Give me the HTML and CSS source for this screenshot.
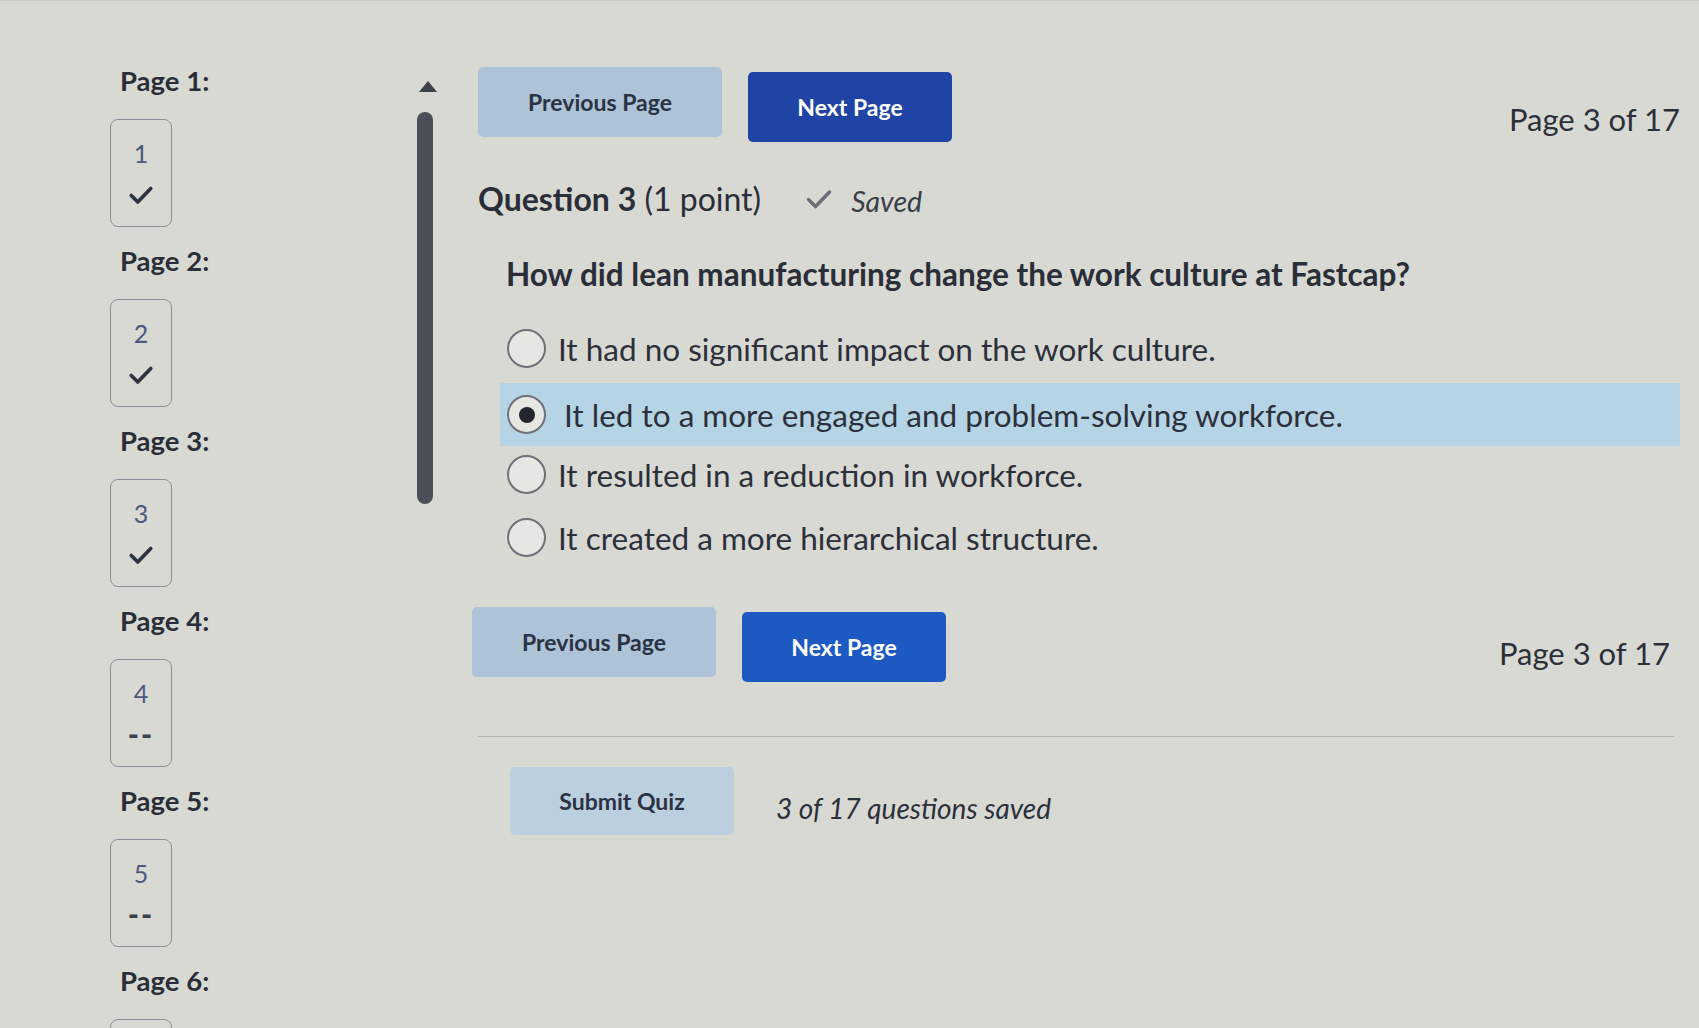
FILE: index.html
```html
<!DOCTYPE html>
<html lang="en">
<head>
<meta charset="utf-8">
<title>Quiz - Page 3 of 17</title>
<link rel="stylesheet" href="styles.css">
</head>
<body>
<div class="screen">
  <aside class="sidebar">
    <div class="page-item">
      <div class="page-label">Page 1:</div>
      <div class="page-box"><span class="num">1</span><svg class="tick" viewBox="0 0 24 24"><path d="M3 12.5l6 6L21 6"/></svg></div>
    </div>
    <div class="page-item">
      <div class="page-label">Page 2:</div>
      <div class="page-box"><span class="num">2</span><svg class="tick" viewBox="0 0 24 24"><path d="M3 12.5l6 6L21 6"/></svg></div>
    </div>
    <div class="page-item">
      <div class="page-label">Page 3:</div>
      <div class="page-box"><span class="num">3</span><svg class="tick" viewBox="0 0 24 24"><path d="M3 12.5l6 6L21 6"/></svg></div>
    </div>
    <div class="page-item">
      <div class="page-label">Page 4:</div>
      <div class="page-box"><span class="num">4</span><span class="dash">--</span></div>
    </div>
    <div class="page-item">
      <div class="page-label">Page 5:</div>
      <div class="page-box"><span class="num">5</span><span class="dash">--</span></div>
    </div>
    <div class="page-item">
      <div class="page-label">Page 6:</div>
      <div class="page-box"></div>
    </div>
  </aside>

  <div class="scroller">
    <div class="scroll-arrow"></div>
    <div class="scroll-thumb"></div>
  </div>

  <main class="main">
    <div class="nav-row">
      <div class="nav-buttons">
        <button class="btn btn-prev">Previous Page</button>
        <button class="btn btn-next">Next Page</button>
      </div>
      <div class="page-count">Page 3 of 17</div>
    </div>

    <div class="q-head">
      <h2 class="q-title"><strong>Question 3</strong> (1 point)</h2>
      <svg class="saved-tick" viewBox="0 0 24 24"><path d="M3 12.5l6 6L21 6"/></svg>
      <span class="saved">Saved</span>
    </div>

    <p class="q-text">How did lean manufacturing change the work culture at Fastcap?</p>

    <ul class="options">
      <li class="option"><span class="radio"></span><span class="opt-text">It had no significant impact on the work culture.</span></li>
      <li class="option selected"><span class="radio checked"></span><span class="opt-text">It led to a more engaged and problem-solving workforce.</span></li>
      <li class="option"><span class="radio"></span><span class="opt-text">It resulted in a reduction in workforce.</span></li>
      <li class="option"><span class="radio"></span><span class="opt-text">It created a more hierarchical structure.</span></li>
    </ul>

    <div class="nav-row nav-bottom">
      <div class="nav-buttons">
        <button class="btn btn-prev">Previous Page</button>
        <button class="btn btn-next btn-next-bright">Next Page</button>
      </div>
      <div class="page-count">Page 3 of 17</div>
    </div>

    <hr class="divider">

    <div class="submit-row">
      <button class="btn btn-submit">Submit Quiz</button>
      <span class="saved-count">3 of 17 questions saved</span>
    </div>
  </main>
</div>
</body>
</html>
```

FILE: styles.css
```css
* { box-sizing: border-box; }

html, body {
  margin: 0;
  padding: 0;
  background: #d9d9d3;
  font-family: Lato, "Open Sans", sans-serif;
  color: #2c303a;
}

.screen {
  display: flex;
  width: 1699px;
  height: 1028px;
  overflow: hidden;
  border-top: 1px solid #c9c9c4;
}

/* Sidebar */
.sidebar {
  width: 417px;
  padding: 64px 0 0 110px;
  display: flex;
  flex-direction: column;
}

.page-item {
  display: flex;
  flex-direction: column;
  align-items: flex-start;
  margin-bottom: 18px;
}

.page-label {
  margin-left: 10px;
  font-size: 27.5px;
  font-weight: 700;
  line-height: 32px;
  color: #2a2e38;
}

.page-box {
  margin-top: 22px;
  width: 62px;
  height: 108px;
  border: 1.5px solid #8b9097;
  border-radius: 8px;
  display: flex;
  flex-direction: column;
  align-items: center;
  padding-top: 18px;
}

.num {
  font-size: 25px;
  line-height: 30px;
  color: #4a5a7e;
}

.tick {
  margin-top: 14px;
  width: 26px;
  height: 26px;
  fill: none;
  stroke: #2d3340;
  stroke-width: 3.4;
  stroke-linecap: round;
  stroke-linejoin: round;
}

.dash {
  margin-top: 12px;
  font-size: 30px;
  font-weight: 900;
  letter-spacing: 2px;
  color: #3b4150;
  line-height: 28px;
}

/* Scrollbar */
.scroller {
  width: 16px;
  padding-top: 80px;
  display: flex;
  flex-direction: column;
  align-items: center;
}

.scroll-arrow {
  width: 0;
  height: 0;
  margin-left: 6px;
  border-left: 9px solid transparent;
  border-right: 9px solid transparent;
  border-bottom: 11px solid #3c414a;
}

.scroll-thumb {
  margin-top: 20px;
  width: 16px;
  height: 392px;
  border-radius: 8px;
  background: #4a4f58;
}

/* Main */
.main {
  width: 1202px;
  margin-left: 45px;
  display: flex;
  flex-direction: column;
}

.nav-row {
  margin-top: 66px;
  display: flex;
  align-items: flex-start;
  justify-content: space-between;
}

.nav-buttons {
  display: flex;
  gap: 26px;
}

.btn {
  font-family: Lato, "Open Sans", sans-serif;
  font-size: 23px;
  font-weight: 700;
  border: none;
  border-radius: 5px;
  height: 70px;
  padding: 0;
}

.btn-prev {
  width: 244px;
  background: #aec2d8;
  color: #2a3343;
}

.btn-next {
  width: 204px;
  background: #1f44a6;
  color: #ffffff;
  margin-top: 5px;
}

.btn-next-bright {
  background: #1c59c2;
}

.page-count {
  font-size: 31px;
  line-height: 36px;
  margin-top: 34px;
  color: #2c303a;
}

.q-head {
  margin-top: 36px;
  display: flex;
  align-items: center;
  height: 42px;
}

.q-title {
  margin: 0;
  font-size: 32px;
  font-weight: 400;
  line-height: 42px;
  color: #2a2e38;
}

.q-title strong { font-weight: 700; }

.saved-tick {
  margin-left: 44px;
  width: 28px;
  height: 28px;
  fill: none;
  stroke: #6b7079;
  stroke-width: 3;
  stroke-linecap: round;
  stroke-linejoin: round;
}

.saved {
  margin-left: 18px;
  margin-top: 4px;
  font-size: 28.5px;
  font-style: italic;
  color: #3a3e48;
}

.q-text {
  margin: 36px 0 0 28px;
  font-size: 31.5px;
  font-weight: 700;
  line-height: 36px;
  color: #2a2e38;
}

.options {
  list-style: none;
  margin: 25px 0 0 22px;
  padding: 0;
}

.option {
  display: flex;
  align-items: center;
  height: 63px;
  padding-left: 7px;
}

.option.selected {
  background: #b5d4e5;
  margin-top: 3px;
  margin-bottom: -3px;
}

.radio {
  width: 39px;
  height: 39px;
  border-radius: 50%;
  border: 2px solid #6d7177;
  background: #e6e6e2;
  display: flex;
  align-items: center;
  justify-content: center;
  flex-shrink: 0;
}

.radio.checked::after {
  content: "";
  width: 16px;
  height: 16px;
  border-radius: 50%;
  background: #23262d;
}

.opt-text {
  margin-left: 12px;
  font-size: 31.5px;
  color: #2c303a;
}

.option.selected .opt-text { margin-left: 18px; }

.nav-bottom {
  margin-top: 38px;
  margin-right: 10px;
}

.nav-bottom .btn-prev { margin-left: -6px; }

.nav-bottom .page-count { margin-top: 28px; }

.divider {
  margin: 54px 0 0 0;
  border: none;
  border-top: 1.5px solid #b3b4b2;
  width: 1196px;
}

.submit-row {
  margin-top: 30px;
  margin-left: 32px;
  display: flex;
  align-items: center;
}

.btn-submit {
  width: 224px;
  height: 68px;
  background: #bccfdf;
  color: #2a3343;
}

.saved-count {
  margin-left: 42px;
  font-size: 28px;
  font-style: italic;
  color: #2c303a;
  padding-top: 14px;
}
```
